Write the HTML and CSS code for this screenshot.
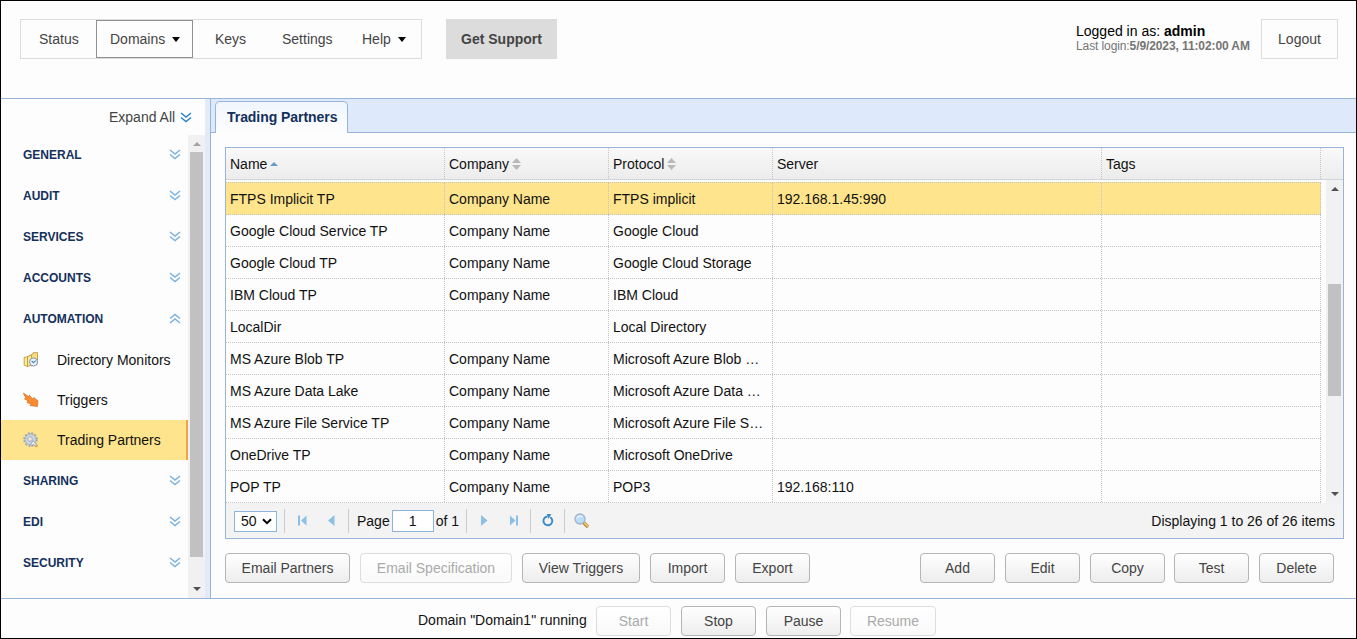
FILE: index.html
```
<!DOCTYPE html>
<html lang="en">
<head>
<meta charset="utf-8">
<title>Trading Partners</title>
<link rel="stylesheet" href="styles.css">
</head>
<body>
<svg class="defs" width="0" height="0">
  <symbol id="down" viewBox="0 0 12 11"><path d="M1 1l5 4 5-4M1 5.500l5 4 5-4" fill="none" stroke="currentColor" stroke-width="1.500"/></symbol>
  <symbol id="up" viewBox="0 0 12 11"><path d="M1 5.500l5-4 5 4M1 10l5-4 5 4" fill="none" stroke="currentColor" stroke-width="1.500"/></symbol>
  <symbol id="sort" viewBox="0 0 9 12"><path d="M4.500 0L9 5H0zM4.500 12L0 7h9z" fill="#b9b9b9"/></symbol>
</svg>
<div class="app">
  <header class="header">
    <nav class="nav">
      <a class="n-status">Status</a>
      <a class="n-domains">Domains<i class="caret"></i></a>
      <a class="n-keys">Keys</a>
      <a class="n-settings">Settings</a>
      <a class="n-help">Help<i class="caret"></i></a>
    </nav>
    <a class="support">Get Support</a>
    <div class="who">
      <div class="user">Logged in as: <b>admin</b></div>
      <div class="last">Last login:<b>5/9/2023, 11:02:00 AM</b></div>
    </div>
    <a class="logout">Logout</a>
  </header>
  <div class="main">
    <aside class="sidebar">
      <div class="expand">Expand All<svg class="chev strong"><use href="#down"/></svg></div>
      <div class="side-body">
        <div class="menu">
          <div class="group">GENERAL<svg class="chev"><use href="#down"/></svg></div>
          <div class="group">AUDIT<svg class="chev"><use href="#down"/></svg></div>
          <div class="group">SERVICES<svg class="chev"><use href="#down"/></svg></div>
          <div class="group">ACCOUNTS<svg class="chev"><use href="#down"/></svg></div>
          <div class="group">AUTOMATION<svg class="chev"><use href="#up"/></svg></div>
          <div class="item"><svg width="16" height="16" viewBox="0 0 16 16"><path d="M6 4l4-2V.8l4.500-.3v11.500L8 14z" fill="#f5dc85" stroke="#c39c3c" stroke-width=".9"/><path d="M1.200 5l1.800.5L4.500 4v10.500l-3.300-1.300zM4.500 4.500L8.500 3v10l-4 1.500z" fill="#fbe99c" stroke="#c39c3c" stroke-width=".9"/><circle cx="10.500" cy="10" r="4" fill="#eef6fd" stroke="#8098b5"/><path d="M8.600 9l1.900 1.700 2.200-2" fill="none" stroke="#4e7fb8" stroke-width="1.100"/></svg>Directory Monitors</div>
          <div class="item"><svg width="16" height="16" viewBox="0 0 16 16"><path d="M.5 1.200L5.500 4.500l1-1.200L9.500 7l1.300-1.500L15 9l-.7 5.500L7 13.500l1.300-1.600L4 10.500l1.200-1.700L1.500 7l1.200-1.300z" fill="#f98b30" stroke="#e07328" stroke-width=".8"/></svg>Triggers</div>
          <div class="item on"><svg width="16" height="16" viewBox="0 0 16 16"><circle cx="7.500" cy="7.500" r="6.300" fill="none" stroke="#97a5b8" stroke-width="2" stroke-dasharray="1.800 1.500"/><circle cx="7.500" cy="7.500" r="5.500" fill="#ccd6e2" stroke="#9ba9bc" stroke-width=".8"/><circle cx="7" cy="7" r="2.300" fill="#f2ecd6" stroke="#94a2b5" stroke-width=".8"/><path d="M7.500 13l2.500-4.500 4.500 5-1.500 1.500-2.500-3-1.500 2z" fill="#eef1f5" stroke="#8593a8" stroke-width=".8"/><path d="M12.300 13.300l2 1.500" stroke="#d8a13c" stroke-width="1.500"/></svg>Trading Partners</div>
          <div class="group low">SHARING<svg class="chev"><use href="#down"/></svg></div>
          <div class="group low">EDI<svg class="chev"><use href="#down"/></svg></div>
          <div class="group low">SECURITY<svg class="chev"><use href="#down"/></svg></div>
        </div>
        <div class="scroll side-scroll"><i class="arr up pale"></i><div class="thumb"></div><i class="arr dn"></i></div>
      </div>
    </aside>
    <section class="content">
      <div class="tabs"><div class="tab">Trading Partners</div></div>
      <div class="grid">
        <div class="row head"><div>Name<i class="asc"></i></div><div>Company<svg class="sort"><use href="#sort"/></svg></div><div>Protocol<svg class="sort"><use href="#sort"/></svg></div><div>Server</div><div>Tags</div></div>
        <div class="grid-body">
          <div class="rows">
            <div class="row sel"><div>FTPS Implicit TP</div><div>Company Name</div><div>FTPS implicit</div><div>192.168.1.45:990</div><div></div></div>
            <div class="row"><div>Google Cloud Service TP</div><div>Company Name</div><div>Google Cloud</div><div></div><div></div></div>
            <div class="row"><div>Google Cloud TP</div><div>Company Name</div><div>Google Cloud Storage</div><div></div><div></div></div>
            <div class="row"><div>IBM Cloud TP</div><div>Company Name</div><div>IBM Cloud</div><div></div><div></div></div>
            <div class="row"><div>LocalDir</div><div></div><div>Local Directory</div><div></div><div></div></div>
            <div class="row"><div>MS Azure Blob TP</div><div>Company Name</div><div>Microsoft Azure Blob …</div><div></div><div></div></div>
            <div class="row"><div>MS Azure Data Lake</div><div>Company Name</div><div>Microsoft Azure Data …</div><div></div><div></div></div>
            <div class="row"><div>MS Azure File Service TP</div><div>Company Name</div><div>Microsoft Azure File S…</div><div></div><div></div></div>
            <div class="row"><div>OneDrive TP</div><div>Company Name</div><div>Microsoft OneDrive</div><div></div><div></div></div>
            <div class="row"><div>POP TP</div><div>Company Name</div><div>POP3</div><div>192.168:110</div><div></div></div>
          </div>
          <div class="scroll grid-scroll"><i class="arr up"></i><div class="thumb"></div><i class="arr dn"></i></div>
        </div>
        <div class="pager">
          <div class="size">50<svg width="10" height="7" viewBox="0 0 10 7"><path d="M1 1.200l4 4 4-4" fill="none" stroke="#000" stroke-width="2"/></svg></div>
          <div class="seg nav-seg"><svg width="9" height="11" viewBox="0 0 9 11"><path d="M0 .5h2v10H0zM8.500 .5v10L3 5.500z" fill="#8cc0e6"/></svg><svg width="8" height="11" viewBox="0 0 8 11"><path d="M7.500 0v11L1 5.500z" fill="#8cc0e6"/></svg></div>
          <div class="seg page-seg">Page<span class="box">1</span>of 1</div>
          <div class="seg nav-seg next"><svg width="8" height="11" viewBox="0 0 8 11"><path d="M1 0v11l6.500-5.500z" fill="#8cc0e6"/></svg><svg width="10" height="11" viewBox="0 0 10 11"><path d="M1 .5v10l5.500-5zM7 .5h2v10H7z" fill="#8cc0e6"/></svg></div>
          <div class="seg re-seg"><svg width="12" height="13" viewBox="0 0 12 13"><path d="M8.300 3.200A4.400 4.400 0 1 1 5.500 2.500" fill="none" stroke="#3d8ac9" stroke-width="1.900"/><path d="M4.800 0h4.500L6.500 5z" fill="#3d8ac9"/></svg></div>
          <div class="seg find-seg"><svg width="16" height="16" viewBox="0 0 16 16"><path d="M9.500 9.500l4.500 4.500" stroke="#a87d33" stroke-width="3.200"/><path d="M10 9.700l4 4" stroke="#f4c766" stroke-width="1.700"/><circle cx="6" cy="6" r="5" fill="#b9dcf8" stroke="#a3b2c9" stroke-width="1.300"/><path d="M3 5.500a3.200 3.200 0 0 1 5.500-1.500" fill="none" stroke="#e9f5ff" stroke-width="1.300"/></svg></div>
          <div class="total">Displaying 1 to 26 of 26 items</div>
        </div>
      </div>
      <div class="actions">
        <div class="btn w125">Email Partners</div><div class="btn w152 off">Email Specification</div><div class="btn w118">View Triggers</div><div class="btn">Import</div><div class="btn">Export</div>
        <div class="btn right">Add</div><div class="btn">Edit</div><div class="btn">Copy</div><div class="btn tight">Test</div><div class="btn">Delete</div>
      </div>
    </section>
  </div>
  <footer class="footer">
    <span class="state">Domain "Domain1" running</span>
    <div class="btn off">Start</div><div class="btn">Stop</div><div class="btn">Pause</div><div class="btn off tight w86">Resume</div>
  </footer>
</div>
</body>
</html>
```
FILE: styles.css
```
* { box-sizing: border-box; }
body { margin: 0; font: 14px/16px "Liberation Sans", Arial, sans-serif; color: #111; background: #fff; }
i { font-style: normal; }
svg { display: block; flex: none; }
.defs { position: absolute; }
.app { width: 1357px; height: 639px; border: 1px solid #000; display: flex; flex-direction: column; overflow: hidden; background: #fdfdfd; white-space: nowrap; }

/* Header */
.header { height: 97px; display: flex; align-items: flex-start; padding: 18px 18px 0 19px; }
.nav { display: flex; width: 402px; height: 40px; border: 1px solid #dcdcdc; color: #444; }
.nav a { display: flex; align-items: center; height: 38px; }
.nav .n-status { width: 75px; padding-left: 18px; }
.nav .n-domains { width: 97px; border: 1px solid #909090; padding-left: 13px; }
.nav .n-keys { padding-left: 22px; width: 89px; }
.nav .n-settings { width: 80px; }
.caret { margin-left: 7px; border: 4.5px solid transparent; border-top: 5px solid #000; border-bottom: 0; }
.support { margin-left: 24px; width: 111px; height: 40px; background: #dcdcdc; color: #444; font-weight: bold; line-height: 40px; text-align: center; }
.who { margin-left: auto; padding-top: 5px; width: 185px; color: #000; }
.user { line-height: 15px; }
.last { font-size: 12px; line-height: 14px; color: #757575; letter-spacing: -0.1px; }
.logout { width: 77px; height: 40px; border: 1px solid #dcdcdc; color: #444; line-height: 38px; text-align: center; }

/* Sidebar */
.main { height: 501px; display: flex; border: solid #98b4d6; border-width: 1px 0; }
.sidebar { width: 210px; border-right: 1px solid #98b4d6; display: flex; flex-direction: column; background: linear-gradient(90deg, #fdfdfd 204px, #e1ebf9 204px); }
.expand { height: 36px; display: flex; align-items: center; padding-left: 108px; color: #444; }
.chev { width: 12px; height: 11px; margin-left: auto; color: #7ab2df; }
.chev.strong { color: #2b83cc; margin-left: 5px; }
.side-body { display: flex; width: 204px; height: 463px; }
.menu { width: 187px; }
.group { height: 41px; display: flex; align-items: center; padding: 0 7px 2px 22px; font-size: 12px; font-weight: bold; color: #14305c; }
.group.low { padding-bottom: 0; }
.item { height: 40px; display: flex; align-items: center; padding-left: 22px; }
.item svg { margin-right: 18px; }
.on { background: #fee48c; border-right: 2px solid #f2a445; }
.scroll { background: #f1f1f1; width: 17px; display: flex; flex-direction: column; align-items: center; }
.thumb { width: 13px; background: #c1c1c1; }
.arr { border: 4px solid transparent; }
.arr.up { border-top: 0; border-bottom-color: #505050; }
.arr.dn { border-bottom: 0; border-top-color: #505050; margin-top: auto; }
.arr.pale { border-bottom-color: #a3a3a3; }
.side-scroll { padding: 7px 0 7px; }
.side-scroll .thumb { height: 405px; margin-top: 6px; }

/* Tabs */
.content { flex: 1; display: flex; flex-direction: column; }
.tabs { height: 34px; background: #deeafc; border-bottom: 1px solid #98b4d6; padding: 2px 0 0 4px; }
.tab { width: 133px; height: 32px; background: linear-gradient(#f0f6fe, #fdfdfd); border: 1px solid #98b4d6; border-bottom: 0; border-radius: 5px 5px 0 0; font-weight: bold; color: #14305c; line-height: 30px; padding-left: 11px; letter-spacing: -0.05px; }

/* Grid */
.grid { width: 1119px; height: 392px; margin: 14px 0 0 14px; border: 1px solid #98b4d6; }
.row { width: 1095px; height: 32px; display: grid; grid-template-columns: 219px 164px 164px 329px 219px; border-bottom: 1px dotted #c4c4c4; }
.row > div { border-right: 1px dotted #c4c4c4; padding-left: 4px; display: flex; align-items: center; }
.row.sel { background: #fee48c; }
.row.head { width: 1117px; height: 32px; background: linear-gradient(#f9f9f9, #ececec); border-bottom: 1px solid #d0d4dc; }
.asc { margin-left: 3px; border: 4.5px solid transparent; border-top: 0; border-bottom-color: #6b9cc8; }
.sort { width: 9px; height: 12px; margin-left: 3px; }
.grid-body { height: 323px; display: flex; justify-content: space-between; }
.rows { padding-top: 2px; }
.rows .row:first-child { height: 33px; border-top: 1px dotted #c4c4c4; }
.grid-scroll { height: 323px; padding: 7px 0 7px; }
.grid-scroll .thumb { height: 112px; margin-top: 93px; }

/* Pager */
.pager { height: 35px; display: flex; align-items: center; background: #f3f3f3; padding-left: 8px; }
.size { width: 43px; height: 21px; margin-top: 1px; border: 1px solid #8db5dc; background: #fff; display: flex; align-items: center; justify-content: space-between; padding: 0 4px 0 6px; }
.seg { height: 24px; border-left: 1px solid #ccc; display: flex; align-items: center; }
.nav-seg { margin-left: 7px; width: 64px; padding-left: 13px; gap: 20px; }
.page-seg { width: 118px; padding-left: 8px; }
.box { width: 42px; height: 22px; margin: 0 2px; border: 1px solid #8db5dc; background: #fff; line-height: 20px; text-align: center; }
.nav-seg.next { margin-left: 0; gap: 21px; }
.re-seg { width: 34px; padding-left: 11px; }
.find-seg { padding-left: 9px; }
.total { margin: 0 8px 0 auto; }

/* Buttons */
.actions { display: flex; gap: 10px; padding: 14px 22px 0 14px; }
.btn { width: 75px; height: 30px; border: 1px solid #b5b5b5; border-radius: 4px; background: linear-gradient(#fff, #ededed); color: #444; line-height: 28px; text-align: center; flex: none; }
.btn.off { color: #aaa; border-color: #ddd; background: linear-gradient(#fff, #f9f9f9); }
.btn.right { margin-left: auto; }
.btn.tight { margin-left: -1px; }
.btn.w125 { width: 125px; }
.btn.w152 { width: 152px; }
.btn.w118 { width: 118px; }
.btn.w86 { width: 86px; }
.footer { height: 39px; display: flex; gap: 10px; padding: 7px 0 0 417px; }
.state { width: 168px; line-height: 28px; }
```
